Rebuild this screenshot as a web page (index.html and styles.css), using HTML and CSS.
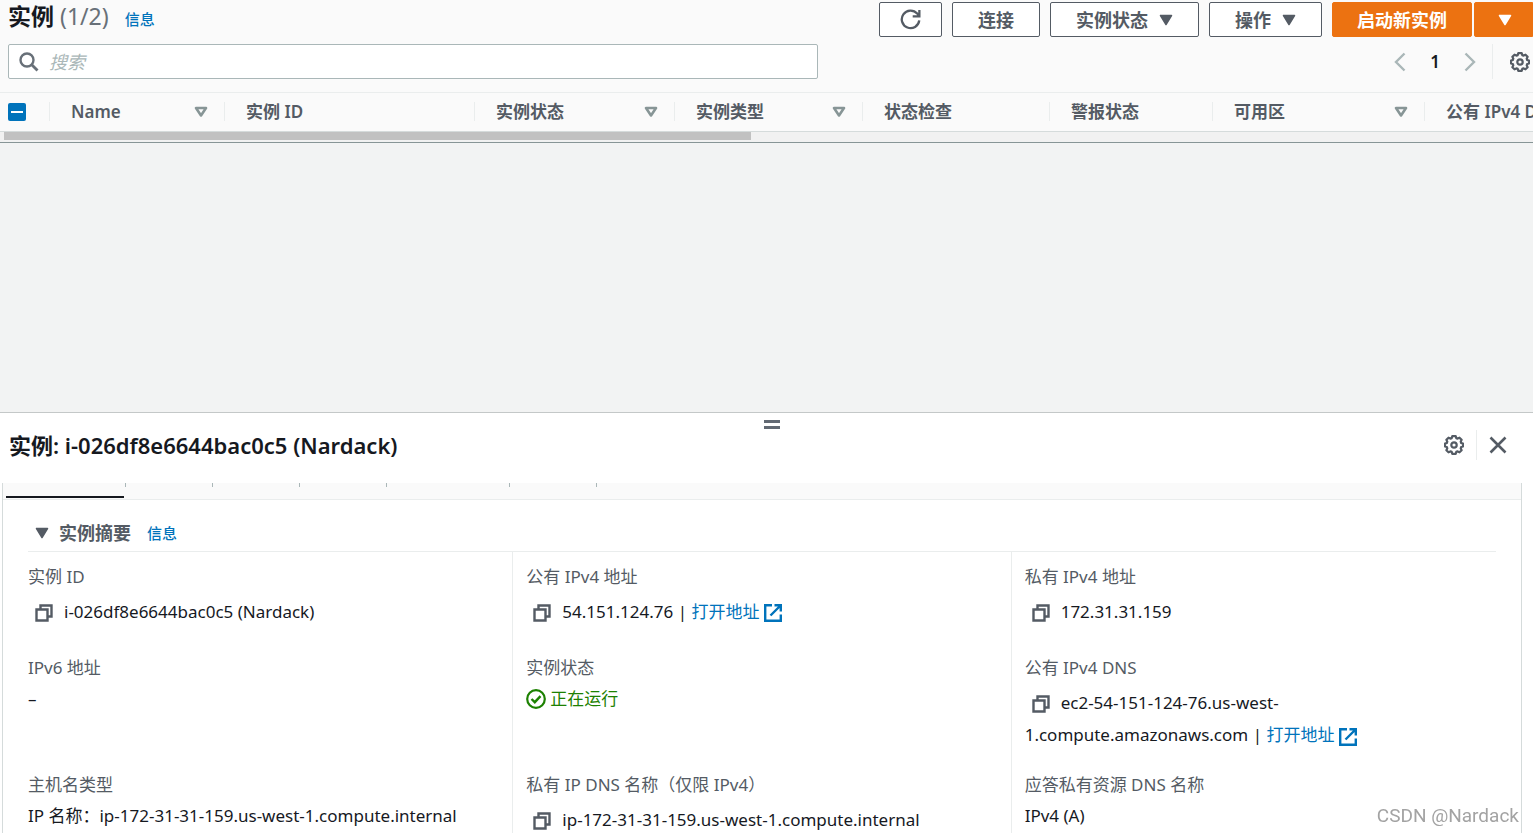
FILE: index.html
```html
<!DOCTYPE html>
<html lang="zh-CN">
<head>
	<meta charset="UTF-8">
	<title>实例</title>
	<link rel="stylesheet" href="styles.css">
</head>
<body>
<svg class="sprite" width="0" height="0">
	<symbol id="copy" viewBox="0 0 18 18">
		<path d="M1.5 5.5h11v11h-11zM5.5 5V1.5h11v11H13" fill="none" stroke="currentColor" stroke-width="2.4"/>
	</symbol>
	<symbol id="external" viewBox="0 0 18 18">
		<path d="M8 1.2H1.2v15.600h15.600V10.500M10.500 1.200h6.300v6.300M16.500 1.500L6.500 11.500" fill="none" stroke="currentColor" stroke-width="2.4"/>
	</symbol>
	<symbol id="gear" viewBox="0 0 20 20">
		<path d="M8.300 1.200h3.400l.6 1.900 1.300.5 1.900-.9 2.100 2.100-.9 1.900.5 1.300 1.800.6v2.800l-1.800.6-.5 1.300.9 1.900-2.100 2.100-1.900-.9-1.300.5-.6 1.900H8.300l-.6-1.900-1.300-.5-1.900.9-2.100-2.100.9-1.900-.5-1.300L1 11.400V8.600L2.800 8l.5-1.300-.9-1.900 2.100-2.100 1.900.9 1.300-.5z" fill="none" stroke="currentColor" stroke-width="2.200" stroke-linejoin="round"/>
		<circle cx="10" cy="10" r="2.700" fill="none" stroke="currentColor" stroke-width="2.200"/>
	</symbol>
	<symbol id="caret" viewBox="0 0 14 12">
		<path d="M1.500 1.500h11L7 10.500z" fill="currentColor" stroke="currentColor" stroke-width="1.500" stroke-linejoin="round"/>
	</symbol>
	<symbol id="sort" viewBox="0 0 14 12">
		<path d="M2 2h10L7 9.500z" fill="none" stroke="currentColor" stroke-width="2.600" stroke-linejoin="round"/>
	</symbol>
</svg>

<main class="list">
	<header class="toolbar">
		<h1>实例 <span class="count">(1/2)</span></h1>
		<a class="info" href="#">信息</a>
		<div class="actions">
			<button type="button" class="btn btn-icon" aria-label="刷新">
				<svg width="21" height="21" viewBox="0 0 22 22"><path d="M20.200 12a9.200 9.200 0 1 1-2.200-7.200L20 7M20.300 1v6.800h-7" fill="none" stroke="currentColor" stroke-width="2.400"/></svg>
			</button>
			<button type="button" class="btn">连接</button>
			<button type="button" class="btn">实例状态<svg class="caret"><use href="#caret"/></svg></button>
			<button type="button" class="btn">操作<svg class="caret"><use href="#caret"/></svg></button>
			<div class="split">
				<button type="button" class="btn primary">启动新实例</button>
				<button type="button" class="btn primary more" aria-label="更多"><svg class="caret"><use href="#caret"/></svg></button>
			</div>
		</div>
	</header>

	<div class="filter">
		<label class="search">
			<svg width="20" height="20" viewBox="0 0 20 20"><circle cx="8" cy="8" r="6.500" fill="none" stroke="currentColor" stroke-width="2.400"/><path d="M12.500 12.500l6 6" stroke="currentColor" stroke-width="2.800"/></svg>
			<input type="text" placeholder="搜索" aria-label="搜索">
		</label>
		<div class="pages">
			<button type="button" class="arrow" aria-label="上一页"><svg width="12" height="20" viewBox="0 0 12 20"><path d="M10.500 1.500L2 10l8.500 8.500" fill="none" stroke="currentColor" stroke-width="2.400"/></svg></button>
			<button type="button" class="page">1</button>
			<button type="button" class="arrow" aria-label="下一页"><svg width="12" height="20" viewBox="0 0 12 20"><path d="M1.500 1.500L10 10l-8.500 8.500" fill="none" stroke="currentColor" stroke-width="2.400"/></svg></button>
		</div>
		<button type="button" class="settings" aria-label="首选项"><svg class="gear"><use href="#gear"/></svg></button>
	</div>

	<div class="table-wrap">
		<table>
			<colgroup>
				<col class="c-check"><col class="c-name"><col class="c-id"><col class="c-state"><col class="c-type"><col class="c-status"><col class="c-alarm"><col class="c-zone"><col class="c-dns">
			</colgroup>
			<thead>
				<tr>
					<th class="check"><div><input type="checkbox" aria-label="全选"></div></th>
					<th><div>Name<svg class="sort"><use href="#sort"/></svg></div></th>
					<th><div>实例 ID</div></th>
					<th><div>实例状态<svg class="sort"><use href="#sort"/></svg></div></th>
					<th><div>实例类型<svg class="sort"><use href="#sort"/></svg></div></th>
					<th><div>状态检查</div></th>
					<th><div>警报状态</div></th>
					<th><div>可用区<svg class="sort"><use href="#sort"/></svg></div></th>
					<th><div>公有 IPv4 DNS</div></th>
				</tr>
			</thead>
		</table>
	</div>
	<div class="scroll"><div class="thumb"></div></div>
</main>

<section class="panel">
	<div class="handle"><span></span></div>
	<header class="panel-head">
		<h2>实例: i-026df8e6644bac0c5 (Nardack)</h2>
		<button type="button" class="plain" aria-label="首选项"><svg class="gear"><use href="#gear"/></svg></button>
		<button type="button" class="plain close" aria-label="关闭"><svg width="18" height="18" viewBox="0 0 18 18"><path d="M1.500 1.500l15 15M16.500 1.500l-15 15" stroke="currentColor" stroke-width="2.600"/></svg></button>
	</header>

	<div class="panel-body">
		<ul class="tabs">
			<li class="active"></li>
			<li></li>
			<li></li>
			<li></li>
			<li class="wide"></li>
			<li></li>
		</ul>

		<div class="summary">
			<div class="summary-head">
				<button type="button" class="toggle"><svg class="caret"><use href="#caret"/></svg>实例摘要</button>
				<a class="info" href="#">信息</a>
			</div>
			<dl class="details">
				<div class="cell">
					<dt>实例 ID</dt>
					<dd><button type="button" class="copy" aria-label="复制"><svg><use href="#copy"/></svg></button>i-026df8e6644bac0c5 (Nardack)</dd>
				</div>
				<div class="cell">
					<dt>公有 IPv4 地址</dt>
					<dd><button type="button" class="copy" aria-label="复制"><svg><use href="#copy"/></svg></button>54.151.124.76 | <a href="#">打开地址<svg class="external"><use href="#external"/></svg></a></dd>
				</div>
				<div class="cell">
					<dt>私有 IPv4 地址</dt>
					<dd><button type="button" class="copy" aria-label="复制"><svg><use href="#copy"/></svg></button>172.31.31.159</dd>
				</div>
				<div class="cell">
					<dt>IPv6 地址</dt>
					<dd>–</dd>
				</div>
				<div class="cell">
					<dt>实例状态</dt>
					<dd class="running"><svg width="20" height="20" viewBox="0 0 20 20"><circle cx="10" cy="10" r="8.800" fill="none" stroke="currentColor" stroke-width="2.200"/><path d="M5.500 10l3.300 3.200 5.700-6" fill="none" stroke="currentColor" stroke-width="2.400"/></svg>正在运行</dd>
				</div>
				<div class="cell">
					<dt>公有 IPv4 DNS</dt>
					<dd><button type="button" class="copy" aria-label="复制"><svg><use href="#copy"/></svg></button>ec2-54-151-124-76.us-west-<wbr>1.compute.amazonaws.com | <a href="#">打开地址<svg class="external"><use href="#external"/></svg></a></dd>
				</div>
				<div class="cell">
					<dt>主机名类型</dt>
					<dd>IP 名称：ip-172-31-31-159.us-west-1.compute.internal</dd>
				</div>
				<div class="cell">
					<dt>私有 IP DNS 名称（仅限 IPv4）</dt>
					<dd><button type="button" class="copy" aria-label="复制"><svg><use href="#copy"/></svg></button>ip-172-31-31-159.us-west-1.compute.internal</dd>
				</div>
				<div class="cell">
					<dt>应答私有资源 DNS 名称</dt>
					<dd>IPv4 (A)</dd>
				</div>
			</dl>
		</div>
	</div>
</section>

<div class="watermark">CSDN @Nardack</div>
</body>
</html>
```
FILE: styles.css
```css
*{
	box-sizing:border-box;
}
body,h1,h2,ul,dl,dd{
	margin:0;
	padding:0;
}
body{
	display:grid;
	grid-template-rows:49.5% 1fr;
	height:100vh;
	overflow:hidden;
	background:#f2f3f3;
	color:#16191f;
	font-family:"Noto Sans","Noto Sans CJK SC",sans-serif;
	font-size:17px;
	line-height:26px;
}
button,input{
	font:inherit;
	color:inherit;
}
button{
	border:none;
	background:none;
	padding:0;
	cursor:pointer;
}
svg{
	display:block;
	flex:none;
}
.sprite{
	position:absolute;
}
a{
	color:#0073bb;
	text-decoration:none;
}
.info{
	font-size:15px;
	font-weight:500;
}
.gear{
	width:20px;
	height:20px;
}
.caret,.sort{
	width:14px;
	height:12px;
}

/* list */
.list{
	min-width:0;
	overflow:hidden;
}
.toolbar{
	display:flex;
	align-items:center;
	padding:2px 0 0 8px;
	background:#fafafa;
}
h1{
	padding-bottom:7px;
	font-size:23px;
	line-height:28px;
	font-weight:600;
}
h2{
	flex:1;
	font-size:22px;
	line-height:30px;
	font-weight:600;
}
.count{
	color:#687078;
	font-weight:400;
}
.toolbar .info{
	margin-left:16px;
	padding-bottom:2px;
}
.actions{
	display:flex;
	gap:10px;
	margin-left:auto;
}
.btn{
	display:flex;
	align-items:center;
	gap:11px;
	height:35px;
	padding:0 25px;
	border:1px solid #545b64;
	border-radius:2px;
	background:#fff;
	color:#545b64;
	font-size:18px;
	line-height:24px;
	font-weight:700;
}
.btn-icon{
	padding:0 20px;
}
.split{
	display:flex;
	gap:2px;
}
.primary{
	padding:0 24px;
	background:#ec7211;
	border-color:#ec7211;
	color:#fff;
}
.more{
	padding:0 20px 0 23px;
	border-radius:2px 0 0 2px;
}
.filter{
	display:flex;
	align-items:center;
	padding:7px 0 13px 8px;
	background:#fafafa;
	color:#545b64;
}
.search{
	display:flex;
	flex:1;
	align-items:center;
	gap:10px;
	max-width:810px;
	height:35px;
	padding:0 10px;
	border:1px solid #aab7b8;
	border-radius:2px;
	background:#fff;
	color:#687078;
}
.search input{
	flex:1;
	min-width:0;
	padding:0;
	border:none;
	outline:none;
	background:none;
	font-size:18px;
}
.search input::placeholder{
	color:#aab7b8;
	font-style:italic;
}
.pages{
	display:flex;
	align-items:center;
	gap:24px;
	margin-left:auto;
	padding-right:16px;
}
.arrow{
	color:#aab7b8;
}
.page{
	color:#16191f;
	font-weight:600;
}
.settings{
	height:35px;
	padding:0 3px 0 17px;
	border-left:1px solid #eaeded;
}

.table-wrap{
	overflow:hidden;
	border-top:1px solid #eaeded;
	border-bottom:1px solid #d5dbdb;
	background:#fafafa;
}
table{
	table-layout:fixed;
	width:1675px;
	border-collapse:collapse;
}
.c-check{width:50px;}
.c-name{width:175px;}
.c-id{width:250px;}
.c-state{width:200px;}
.c-type{width:188px;}
.c-status{width:187px;}
.c-alarm{width:163px;}
.c-zone{width:212px;}
.c-dns{width:250px;}
th{
	padding:9px 0 10px;
	color:#545b64;
	font-weight:600;
	text-align:left;
	white-space:nowrap;
}
th div{
	display:flex;
	align-items:center;
	justify-content:space-between;
	height:19px;
	padding:0 16px 0 21px;
	border-right:1px solid #eaeded;
}
.check div{
	padding-left:8px;
}
.check input{
	appearance:none;
	display:grid;
	place-items:center;
	width:18px;
	height:18px;
	margin:0;
	border-radius:2px;
	background:#0073bb;
}
.check input::before{
	content:'';
	width:12px;
	height:2px;
	background:#fff;
}
.sort{
	color:#879596;
}
.scroll{
	height:11px;
	padding:0 4px;
	border-bottom:1px solid #879596;
	background:#f1f1f1;
}
.thumb{
	width:49%;
	height:8px;
	background:#c1c1c1;
}

/* split panel */
.panel{
	display:flex;
	flex-direction:column;
	min-height:0;
	border-top:1px solid #c4c8c8;
	background:#fff;
}
.handle{
	display:flex;
	justify-content:center;
	padding:7px 0 0 10px;
}
.handle span{
	width:16px;
	height:9px;
	border:solid #626973;
	border-width:3px 0;
}
.panel-head{
	display:flex;
	align-items:center;
	padding:1px 16px 23px 9px;
}
.plain{
	display:flex;
	align-items:center;
	height:30px;
	color:#545b64;
}
.close{
	margin-left:12px;
	padding:0 10px 0 12px;
	border-left:1px solid #eaeded;
}
.panel-body{
	flex:1;
	min-height:0;
	margin:0 11px 0 2px;
	overflow:hidden;
	border:solid #d5dbdb;
	border-width:0 1px;
}
.tabs{
	display:flex;
	height:17px;
	padding-left:3px;
	border-bottom:1px solid #eaeded;
	background:#fafafa;
	list-style:none;
}
.tabs li{
	display:flex;
	justify-content:flex-end;
	width:87px;
}
.tabs .wide{
	width:123px;
}
.tabs li::after{
	content:'';
	width:1px;
	height:4px;
	background:#aab7b8;
}
.tabs .active{
	width:118px;
	height:15px;
	margin-right:2px;
	border-bottom:2px solid #16191f;
}
.tabs .active::after{
	margin-right:-2px;
}
.summary{
	padding:0 25px;
}
.summary-head{
	display:flex;
	align-items:center;
	gap:16px;
	padding:20px 0 5px;
	border-bottom:1px solid #eaeded;
}
.toggle{
	display:flex;
	align-items:center;
	gap:10px;
	padding-left:7px;
	color:#545b64;
	font-size:18px;
	font-weight:700;
}
.details{
	display:grid;
	grid-template-columns:repeat(3,1fr);
	margin:0 -13px 0 -14px;
}
.cell{
	padding:12px 13px;
	border-left:1px solid #eaeded;
}
.cell:nth-child(3n+1){
	border-left-color:transparent;
}
dt{
	margin-bottom:5px;
	color:#545b64;
}
.copy{
	display:inline-flex;
	align-items:center;
	height:36px;
	padding:0 11px 0 7px;
	vertical-align:middle;
	color:#545b64;
}
.copy svg,.external{
	width:18px;
	height:18px;
}
.external{
	display:inline-block;
	margin-left:5px;
	vertical-align:middle;
}
.running{
	display:flex;
	align-items:center;
	gap:4px;
	color:#1d8102;
}
.watermark{
	position:fixed;
	right:14px;
	bottom:4px;
	color:#a3a3a3;
	font-family:Roboto,sans-serif;
	font-size:19px;
}
```
